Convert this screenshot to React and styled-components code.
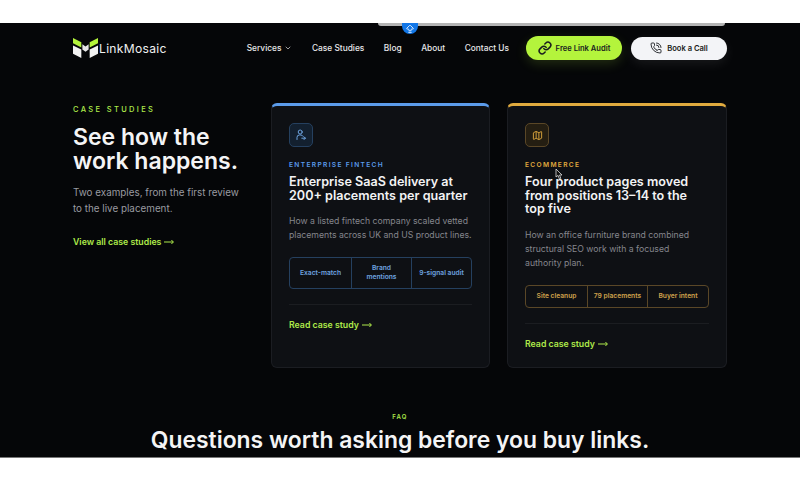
import React from 'react';
import styled, { createGlobalStyle } from 'styled-components';
import { ArrowBigUpDash, ChevronDown, Link, Map, PhoneCall } from 'lucide-react';

const GlobalStyle = createGlobalStyle`
  html, body {
    margin: 0;
    padding: 0;
    background: #fff;
    font-family: Inter, "Liberation Sans", sans-serif;
  }
  * { box-sizing: border-box; }
`;

const Frame = styled.div`
  width: 800px;
  height: 480px;
  display: flex;
  flex-direction: column;
  background: #fff;
  overflow: hidden;
`;

const WhiteBar = styled.div`
  height: ${(p) => p.$h}px;
  flex: none;
  background: #fff;
`;

const Screen = styled.div`
  position: relative;
  height: 435px;
  flex: none;
  padding: 13px 73px 0;
  background: #050608;
  border-bottom: 1px solid #777;
  overflow: hidden;
`;

const BrowserEdge = styled.div`
  position: absolute;
  top: 0;
  left: 378px;
  width: 347px;
  height: 3px;
  background: #b4b4b4;
  border-radius: 0 0 10px 10px;
`;

const Badge = styled.div`
  position: absolute;
  top: 0;
  left: 402px;
  width: 16px;
  height: 11px;
  display: flex;
  align-items: center;
  justify-content: center;
  background: #1277e8;
  color: #fff;
  border-radius: 0 0 8px 8px;
`;

const Header = styled.header`
  display: flex;
  align-items: center;
  justify-content: space-between;
  height: 24px;
`;

const Logo = styled.div`
  display: flex;
  align-items: center;
  gap: 1px;
  color: #f0f0f0;
  font-size: 12.1px;
  font-weight: 400;
  letter-spacing: 0.3px;
`;

const Nav = styled.nav`
  display: flex;
  align-items: center;
  margin-left: auto;
  gap: 19.5px;
`;

const NavLink = styled.span`
  display: flex;
  align-items: center;
  gap: 3px;
  color: #e8e8ea;
  font-size: 8.35px;
  font-weight: 500;
`;

const Actions = styled.div`
  display: flex;
  align-items: center;
  gap: 9px;
  margin-left: 17px;
`;

const Pill = styled.span`
  display: flex;
  align-items: center;
  justify-content: center;
  gap: ${(p) => (p.$primary ? 4 : 5)}px;
  width: 96px;
  height: ${(p) => (p.$primary ? 24 : 23)}px;
  border-radius: 12px;
  background: ${(p) => (p.$primary ? '#b4f43c' : '#f3f4f7')};
  color: #1a1c20;
  font-size: 7.6px;
  font-weight: 600;
  box-shadow: 0 4px 12px ${(p) => (p.$primary ? 'rgba(180,244,60,.16)' : 'rgba(255,255,255,.08)')};
`;

const Main = styled.main`
  display: grid;
  grid-template-columns: 181px 219px 220px;
  column-gap: 17px;
  margin-top: 43px;
`;

const Intro = styled.div`
  padding-top: 3px;
`;

const Kicker = styled.div`
  color: #aeea4a;
  font-size: 7.5px;
  font-weight: 500;
  letter-spacing: 2.35px;
  line-height: 8px;
`;

const Headline = styled.h1`
  margin: 11px 0 0;
  width: 190px;
  color: #f4f4f5;
  font-size: 23px;
  font-weight: 600;
  line-height: 24px;
`;

const Lead = styled.p`
  margin: 11px 0 0;
  width: 170px;
  color: #9a9ba1;
  font-size: 9.85px;
  line-height: 16px;
`;

const GreenLink = styled.span`
  display: flex;
  align-items: center;
  gap: 3px;
  color: #aeea4a;
  font-size: 8.75px;
  font-weight: 600;
  line-height: 12px;
`;

const IntroLink = styled(GreenLink)`
  margin-top: 20px;
`;

const Card = styled.article`
  height: 265px;
  padding: 17px 17px 0;
  background: #0e1014;
  border: 1px solid #1b1d22;
  border-top: 3px solid ${(p) => p.$accent};
  border-radius: 6px;
`;

const IconBox = styled.div`
  width: 24px;
  height: 24px;
  display: flex;
  align-items: center;
  justify-content: center;
  color: ${(p) => p.$accent};
  background: ${(p) => p.$tint};
  border: 1px solid ${(p) => p.$line};
  border-radius: 5px;
`;

const Category = styled.div`
  margin-top: 15px;
  color: ${(p) => p.$accent};
  font-size: 6.6px;
  font-weight: 600;
  letter-spacing: 1.35px;
  line-height: 7px;
`;

const Title = styled.h2`
  margin: 6px 0 0;
  max-width: 180px;
  color: #f3f3f4;
  font-size: 12.6px;
  font-weight: 600;
  line-height: 13.7px;
`;

const Body = styled.p`
  margin: 12px 0 0;
  max-width: ${(p) => (p.$narrow ? '176px' : 'none')};
  color: #85868d;
  font-size: 8.7px;
  line-height: 14px;
`;

const Chips = styled.div`
  display: grid;
  grid-template-columns: 61px 60px 1fr;
  width: ${(p) => (p.$wide ? 183 : 184)}px;
  min-height: ${(p) => (p.$wide ? 32 : 23)}px;
  margin-top: 15px;
  border: 1px solid ${(p) => p.$line};
  border-radius: 4px;
`;

const Chip = styled.div`
  display: flex;
  align-items: center;
  justify-content: center;
  padding: 0 5px;
  color: ${(p) => p.$accent};
  font-size: 6.7px;
  font-weight: 600;
  line-height: 9px;
  text-align: center;
  border-left: 1px solid ${(p) => p.$line};
  &:first-child { border-left: none; }
`;

const Divider = styled.div`
  height: 1px;
  margin-top: 15px;
  background: #1b1d21;
`;

const CardLink = styled(GreenLink)`
  margin-top: 14px;
`;

const Faq = styled.section`
  margin-top: 45px;
  text-align: center;
`;

const FaqKicker = styled.div`
  color: #aeea4a;
  font-size: 6px;
  font-weight: 600;
  letter-spacing: 1.2px;
  line-height: 7px;
`;

const FaqTitle = styled.h2`
  margin: 7px 0 0;
  color: #f4f4f5;
  font-size: 22.9px;
  font-weight: 600;
  line-height: 26px;
  white-space: nowrap;
`;

const Cursor = styled.svg`
  position: absolute;
  left: 555px;
  top: 145px;
`;

const blue = {
  accent: '#5b9bea',
  tint: '#13202f',
  line: '#25405f',
  text: '#6ea4e0',
};

const gold = {
  accent: '#e0aa3e',
  tint: '#241e12',
  line: '#5a4727',
  text: '#d0a24c',
};

const LogoMark = () => (
  <svg width="25" height="20" viewBox="0 0 24 19">
    <path d="M0 0l8 4v5L0 5z" fill="#b4f43c" />
    <path d="M24 0l-8 4v5l8-4z" fill="#b4f43c" />
    <path d="M0 7l8 4v8l-8-4z" fill="#f2f2f2" />
    <path d="M24 7l-8 4v8l8-4z" fill="#f2f2f2" />
    <path d="M9 6l3 2 3-2v5l-3 2-3-2z" fill="#e8e8e8" />
  </svg>
);

const UserArrow = () => (
  <svg width="12" height="12" viewBox="0 0 12 12" fill="none" stroke="currentColor" strokeWidth="1" strokeLinecap="round" strokeLinejoin="round">
    <circle cx="5.2" cy="3" r="2" />
    <path d="M2 10.5V8.4A2.4 2.4 0 0 1 4.4 6H6a2.4 2.4 0 0 1 2 1.2" />
    <path d="M6.8 9.2h3.6M9 7.8l1.4 1.4L9 10.6" />
  </svg>
);

const LongArrow = () => (
  <svg width="10" height="6" viewBox="0 0 10 6" fill="none" stroke="currentColor" strokeWidth="1">
    <path d="M0 3h9.2M7.4 1l2 2-2 2" />
  </svg>
);

function Stat({ items, palette, wide }) {
  return (
    <Chips $line={palette.line} $wide={wide}>
      {items.map((item) => (
        <Chip key={item} $accent={palette.text} $line={palette.line}>{item}</Chip>
      ))}
    </Chips>
  );
}

export default function App() {
  return (
    <Frame>
      <GlobalStyle />
      <WhiteBar $h={23} />
      <Screen>
        <BrowserEdge />
        <Badge><ArrowBigUpDash size={10} strokeWidth={2} /></Badge>
        <Header>
          <Logo><LogoMark />LinkMosaic</Logo>
          <Nav>
            <NavLink>Services <ChevronDown size={8} /></NavLink>
            <NavLink>Case Studies</NavLink>
            <NavLink>Blog</NavLink>
            <NavLink>About</NavLink>
            <NavLink>Contact Us</NavLink>
          </Nav>
          <Actions>
            <Pill $primary><Link size={14} strokeWidth={2.6} />Free Link Audit</Pill>
            <Pill><PhoneCall size={12} strokeWidth={1.8} />Book a Call</Pill>
          </Actions>
        </Header>
        <Main>
          <Intro>
            <Kicker>CASE STUDIES</Kicker>
            <Headline>See how the work happens.</Headline>
            <Lead>Two examples, from the first review to the live placement.</Lead>
            <IntroLink>View all case studies <LongArrow /></IntroLink>
          </Intro>
          <Card $accent={blue.accent}>
            <IconBox $accent={blue.text} $tint={blue.tint} $line={blue.line}><UserArrow /></IconBox>
            <Category $accent={blue.accent}>ENTERPRISE FINTECH</Category>
            <Title>Enterprise SaaS delivery at 200+ placements per quarter</Title>
            <Body>How a listed fintech company scaled vetted placements across UK and US product lines.</Body>
            <Stat items={['Exact-match', 'Brand mentions', '9-signal audit']} palette={blue} wide />
            <Divider />
            <CardLink>Read case study <LongArrow /></CardLink>
          </Card>
          <Card $accent={gold.accent}>
            <IconBox $accent={gold.accent} $tint={gold.tint} $line={gold.line}><Map size={11} strokeWidth={2} /></IconBox>
            <Category $accent={gold.accent}>ECOMMERCE</Category>
            <Title>Four product pages moved from positions 13–14 to the top five</Title>
            <Body $narrow>How an office furniture brand combined structural SEO work with a focused authority plan.</Body>
            <Stat items={['Site cleanup', '79 placements', 'Buyer intent']} palette={gold} />
            <Divider />
            <CardLink>Read case study <LongArrow /></CardLink>
          </Card>
        </Main>
        <Faq>
          <FaqKicker>FAQ</FaqKicker>
          <FaqTitle>Questions worth asking before you buy links.</FaqTitle>
        </Faq>
        <Cursor width="8" height="12" viewBox="0 0 8 12">
          <path d="M1 1v8l2-1.6L4.4 11l1.4-.7L4.5 7H7z" fill="#111" stroke="#ddd" strokeWidth="0.8" />
        </Cursor>
      </Screen>
      <WhiteBar $h={22} />
    </Frame>
  );
}
